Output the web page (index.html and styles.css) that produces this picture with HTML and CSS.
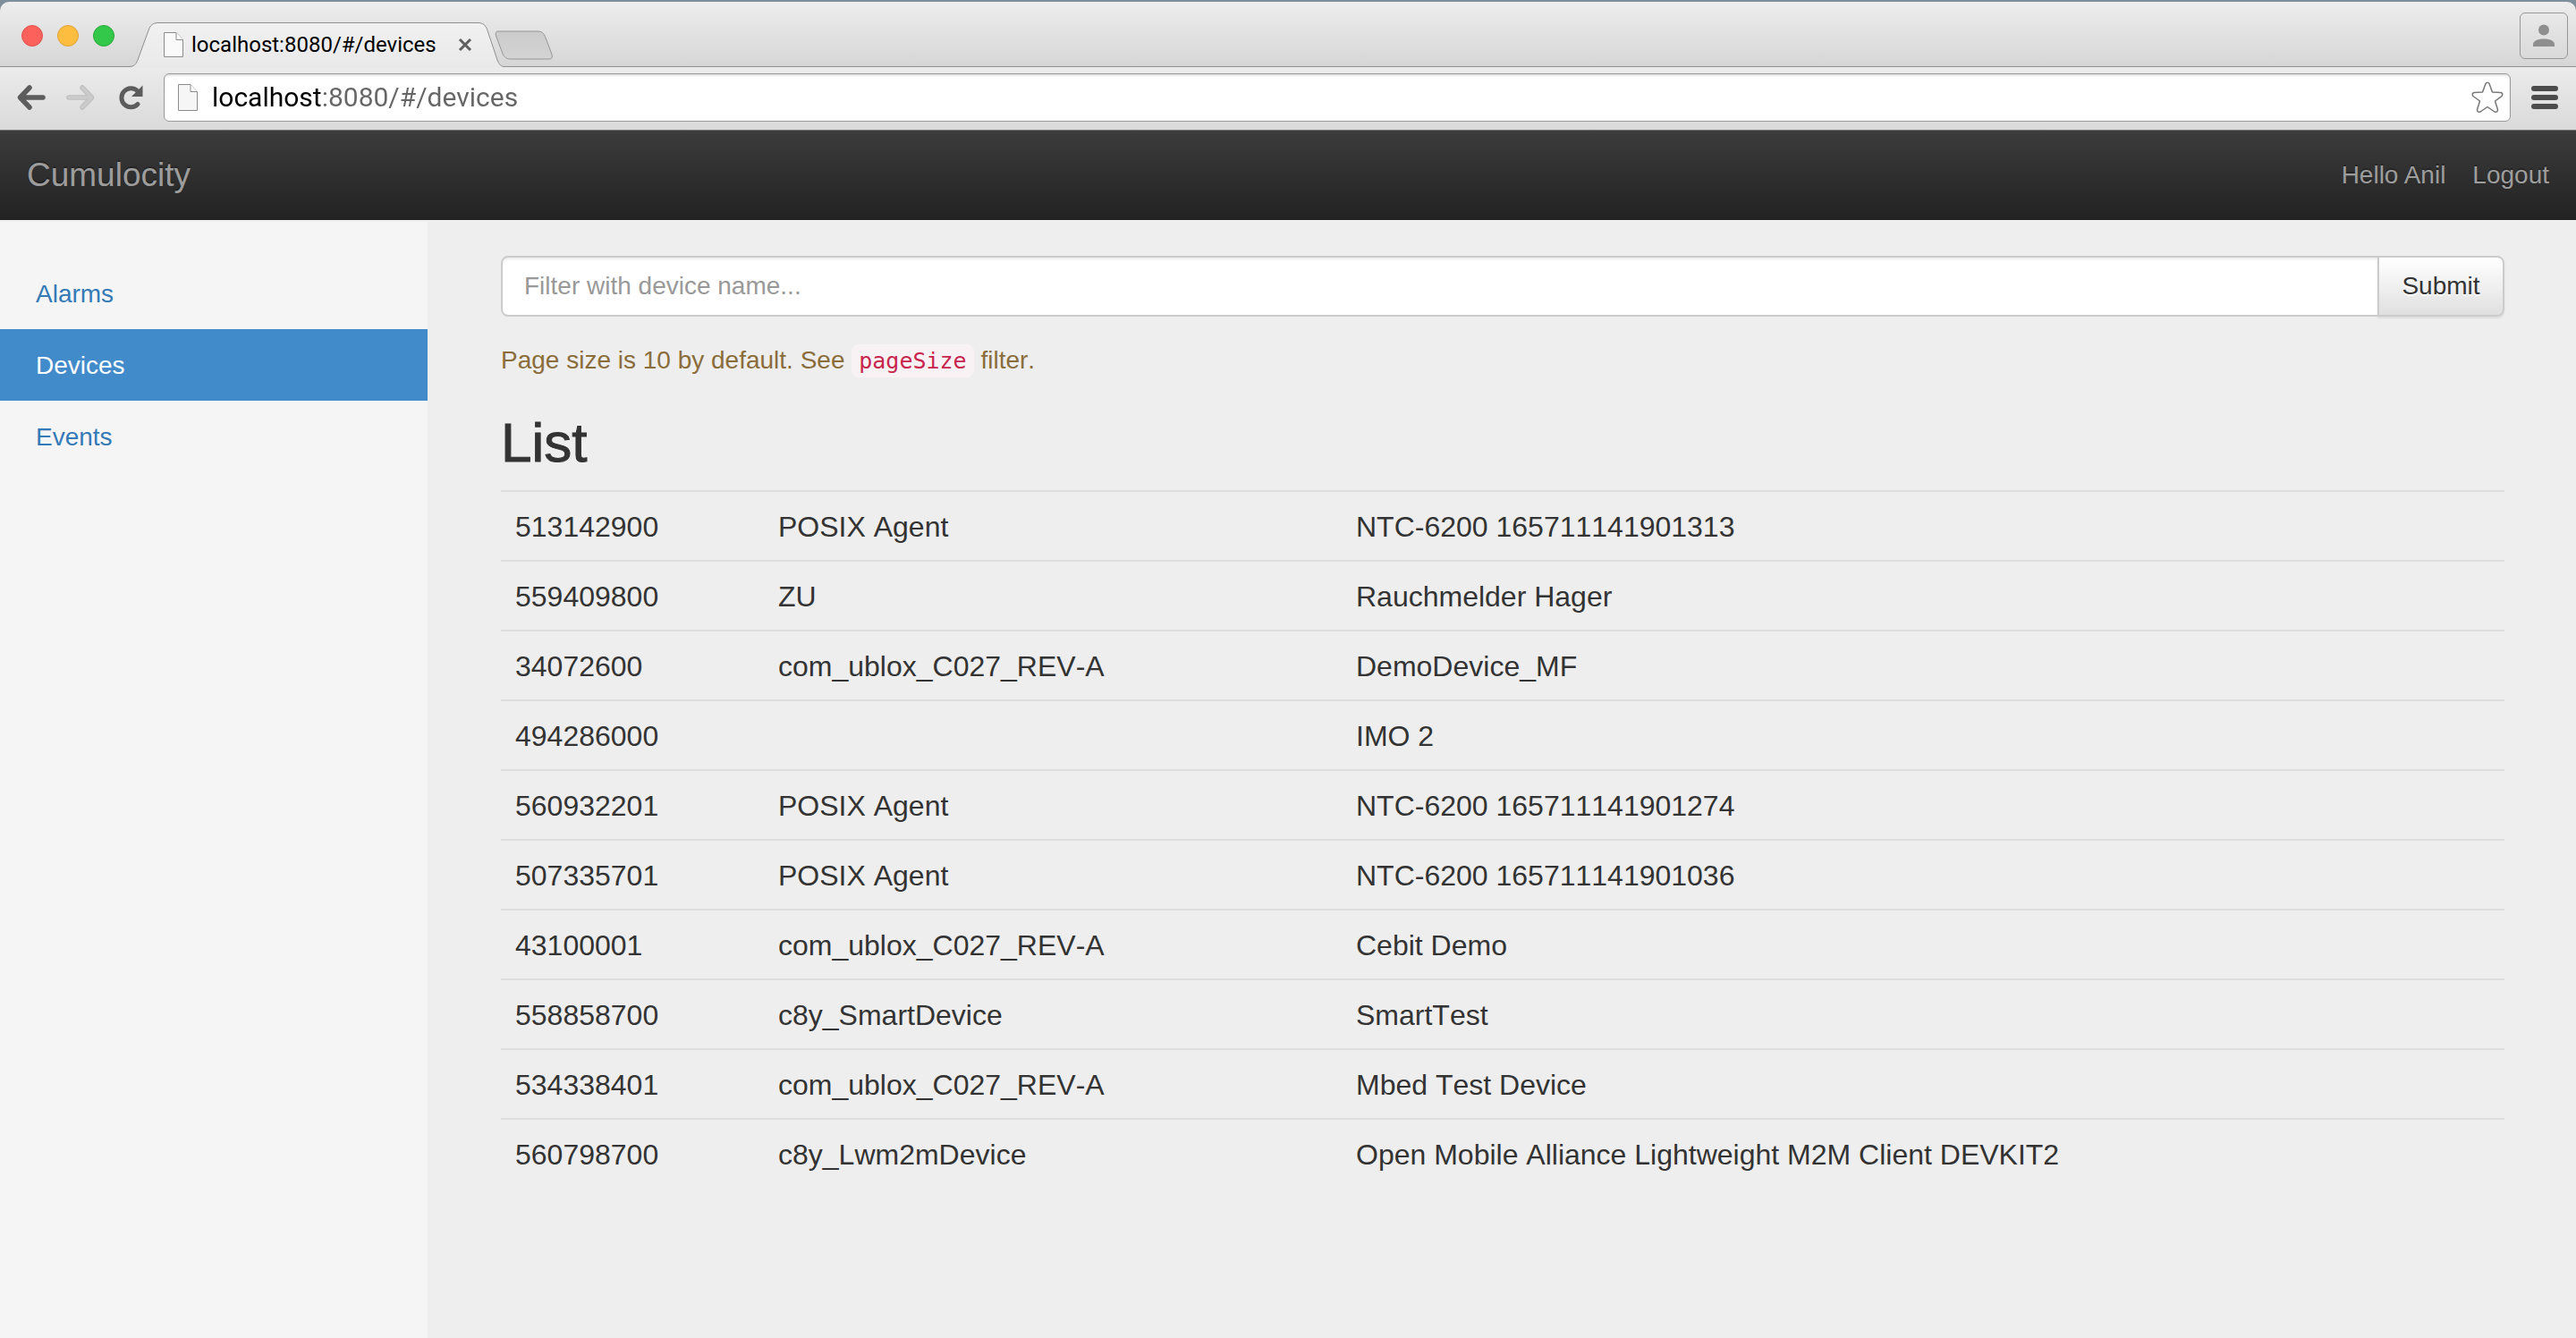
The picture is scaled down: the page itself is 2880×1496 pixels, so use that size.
FILE: index.html
```html
<!DOCTYPE html>
<html lang="en">
<head>
<meta charset="utf-8">
<title>localhost:8080/#/devices</title>
<link rel="stylesheet" href="styles.css">
</head>
<body>
<div class="window">
  <header class="chrome">
    <div class="tabstrip">
      <div class="lights">
        <button class="light light-close" aria-label="Close window"></button>
        <button class="light light-min" aria-label="Minimize window"></button>
        <button class="light light-max" aria-label="Zoom window"></button>
      </div>
      <div class="tab">
        <svg class="tab-shape" width="420" height="51" viewBox="0 0 420 51" aria-hidden="true">
          <defs><linearGradient id="tabfill" x1="0" y1="0" x2="0" y2="1"><stop offset="0" stop-color="#f1f1f1"/><stop offset="1" stop-color="#e9e9e9"/></linearGradient></defs>
          <path d="M0 51V49.5C6 49.500 8 47 10 42L22 9C24 3 27 .5 33 .5H390C396 .5 399 3 401 9L412 42C414 47 416 49.500 420 49.500V51Z" fill="url(#tabfill)"/>
          <path d="M0 49.500C6 49.500 8 47 10 42L22 9C24 3 27 .5 33 .5H390C396 .5 399 3 401 9L412 42C414 47 416 49.500 420 49.500" fill="none" stroke="#8f8f8f"/>
        </svg>
        <svg class="page-icon" width="22" height="30" viewBox="0 0 22 30" aria-hidden="true"><path d="M.5 1.500H14L21.500 9.500V28.500H.5Z" fill="#fafafa" stroke="#8c8c8c"/><path d="M14 1.500V9.500H21.500" fill="#fff" stroke="#8c8c8c"/></svg>
        <span class="tab-title">localhost:8080/#/devices</span>
        <button class="tab-close" aria-label="Close tab"><svg width="16" height="16" viewBox="0 0 16 16"><path d="M2 2L14 14M14 2L2 14" stroke="#5f5f5f" stroke-width="3"/></svg></button>
      </div>
      <button class="new-tab" aria-label="New tab"><svg width="66" height="34" viewBox="0 0 66 34"><defs><linearGradient id="nt" x1="0" y1="0" x2="0" y2="1"><stop offset="0" stop-color="#cbcbcb"/><stop offset="1" stop-color="#d4d4d4"/></linearGradient></defs><path d="M4 1H48C53 1 55 3 57 8L64 27C65 30 64 32 61 32H18C13 32 11 30 9 26L1.500 6C1 3 1 1 4 1Z" fill="url(#nt)" stroke="#959595"/></svg></button>
      <button class="profile" aria-label="Profile"><svg width="24" height="26" viewBox="0 0 24 26"><circle cx="12" cy="6.500" r="6" fill="#8e8e8e"/><path d="M0 25V22C1 18 6 16.500 12 16.500S23 18 24 22V25Z" fill="#8e8e8e"/></svg></button>
    </div>
    <div class="toolbar">
      <button class="tool" aria-label="Back"><svg width="32" height="28" viewBox="0 0 32 28"><path d="M14 3L3.500 14L14 25M4 14H29" fill="none" stroke="#5c5c5c" stroke-width="5.500" stroke-linecap="round" stroke-linejoin="round"/></svg></button>
      <button class="tool" aria-label="Forward"><svg width="32" height="28" viewBox="0 0 32 28"><path d="M18 3L28.500 14L18 25M28 14H3" fill="none" stroke="#bdbdbd" stroke-width="5.500" stroke-linecap="round" stroke-linejoin="round"/><path d="M18 3L28.500 14L18 25M28 14H3" fill="none" stroke="#cbcbcb" stroke-width="3.500" stroke-linecap="round" stroke-linejoin="round"/></svg></button>
      <button class="tool reload" aria-label="Reload"><svg width="28" height="28" viewBox="0 0 28 28"><path d="M21.500 6.500A10.500 10.500 0 1 0 22 21.500" fill="none" stroke="#5c5c5c" stroke-width="5" stroke-linecap="round"/><path d="M27.500 .5V13H15Z" fill="#5c5c5c"/></svg></button>
      <div class="address">
        <svg class="page-icon" width="22" height="30" viewBox="0 0 22 30" aria-hidden="true"><path d="M.5 .5H14L21.500 8.500V29.500H.5Z" fill="#f6f6f6" stroke="#8c8c8c"/><path d="M14 .5V8.500H21.500" fill="#fff" stroke="#8c8c8c"/></svg>
        <input class="url" type="text" value="localhost:8080/#/devices" aria-label="Address">
        <button class="star" aria-label="Bookmark"><svg width="36" height="36" viewBox="0 0 36 36"><path d="M16 2.500Q18 0 20 2.500L23.500 12L33 12.500Q36 13.500 34 16.500L26.500 22L29.500 31.500Q29.500 35 26 34L18 28.500L10 34Q6.500 35 6.500 31.500L9.500 22L2 16.500Q0 13.500 3 12.500L12.500 12Z" fill="#fff" stroke="#777" stroke-width="1.500" stroke-linejoin="round"/></svg></button>
      </div>
      <button class="menu" aria-label="Menu"><svg width="30" height="26" viewBox="0 0 30 26"><g fill="#4c4c4c"><rect width="30" height="6" rx="3"/><rect y="10" width="30" height="6" rx="3"/><rect y="20" width="30" height="6" rx="3"/></g></svg></button>
    </div>
  </header>

  <nav class="navbar">
    <a class="brand" href="#/">Cumulocity</a>
    <div class="nav-links">
      <span>Hello Anil</span>
      <a href="#/logout">Logout</a>
    </div>
  </nav>

  <div class="layout">
    <nav class="sidebar">
      <a href="#/alarms">Alarms</a>
      <a class="active" href="#/devices">Devices</a>
      <a href="#/events">Events</a>
    </nav>
    <main class="content">
      <form class="filter">
        <input class="filter-input" type="text" placeholder="Filter with device name..." aria-label="Filter with device name">
        <button class="submit" type="button">Submit</button>
      </form>
      <p class="help">Page size is 10 by default. See <code>pageSize</code> filter.</p>
      <h2>List</h2>
      <table class="devices">
        <colgroup><col class="col-id"><col class="col-type"><col></colgroup>
        <tbody>
          <tr><td>513142900</td><td>POSIX Agent</td><td>NTC-6200 165711141901313</td></tr>
          <tr><td>559409800</td><td>ZU</td><td>Rauchmelder Hager</td></tr>
          <tr><td>34072600</td><td>com_ublox_C027_REV-A</td><td>DemoDevice_MF</td></tr>
          <tr><td>494286000</td><td></td><td>IMO 2</td></tr>
          <tr><td>560932201</td><td>POSIX Agent</td><td>NTC-6200 165711141901274</td></tr>
          <tr><td>507335701</td><td>POSIX Agent</td><td>NTC-6200 165711141901036</td></tr>
          <tr><td>43100001</td><td>com_ublox_C027_REV-A</td><td>Cebit Demo</td></tr>
          <tr><td>558858700</td><td>c8y_SmartDevice</td><td>SmartTest</td></tr>
          <tr><td>534338401</td><td>com_ublox_C027_REV-A</td><td>Mbed Test Device</td></tr>
          <tr><td>560798700</td><td>c8y_Lwm2mDevice</td><td>Open Mobile Alliance Lightweight M2M Client DEVKIT2</td></tr>
        </tbody>
      </table>
    </main>
  </div>
</div>
</body>
</html>
```
FILE: styles.css
```css
*, *::before, *::after { box-sizing: border-box; }

body {
  margin: 0;
  background: #7f8e9b;
  color: #333;
  font: 28px/40px "Liberation Sans", Arial, sans-serif;
}

button {
  padding: 0;
  border: 0;
  background: none;
  font: inherit;
  color: inherit;
}

svg { display: block; flex: none; }
a { text-decoration: none; }

.window {
  display: flex;
  flex-direction: column;
  min-height: 100vh;
  padding-top: 2px;
}

/* Browser frame */
.chrome { font-family: Roboto, sans-serif; }

.tabstrip {
  display: flex;
  align-items: flex-end;
  height: 73px;
  border-radius: 10px 10px 0 0;
  border-bottom: 1px solid #8f8f8f;
  background: linear-gradient(#ededed, #d6d6d6);
}

.lights {
  display: flex;
  gap: 16px;
  width: 144px;
  padding: 0 0 22px 24px;
}

.light {
  width: 24px;
  height: 24px;
  border: 1px solid;
  border-radius: 50%;
}
.light-close { background: #fc615c; border-color: #e2504a; }
.light-min { background: #fdbe40; border-color: #e0a035; }
.light-max { background: #34c84a; border-color: #27a833; }

.tab {
  position: relative;
  display: flex;
  align-items: center;
  width: 420px;
  height: 50px;
  margin-bottom: -1px;
  padding: 0 36px 0 39px;
}
.tab-shape { position: absolute; left: 0; top: 0; }
.tab .page-icon, .tab-title, .tab-close { position: relative; }
.tab-title {
  flex: 1;
  margin-left: 9px;
  font-size: 24px;
  line-height: 28px;
  color: #000;
  white-space: nowrap;
}

.new-tab { margin: 0 auto 6px -11px; }

.profile {
  display: grid;
  place-items: center;
  width: 54px;
  height: 52px;
  margin: 0 9px 8px 0;
  border: 1px solid #989898;
  border-radius: 6px;
}

.toolbar {
  display: flex;
  align-items: center;
  height: 71px;
  padding: 0 20px 2px 19px;
  border-bottom: 1px solid #777;
  background: linear-gradient(#ebebeb, #dadada);
}
.tool { margin-right: 23px; }
.tool.reload { margin-left: 3px; }

.address {
  display: flex;
  flex: 1;
  align-items: center;
  height: 54px;
  margin-right: 23px;
  padding: 0 7px 0 15px;
  border: 1px solid #9a9a9a;
  border-radius: 6px;
  background: #fff;
  box-shadow: inset 0 2px 2px #e4e4e4;
}

/* The host is black, the rest of the URL grey */
.url {
  flex: 1;
  min-width: 0;
  height: 40px;
  margin-left: 16px;
  padding: 0;
  border: 0;
  outline: 0;
  background: linear-gradient(90deg, #000 123px, #666 123px);
  -webkit-background-clip: text;
  background-clip: text;
  -webkit-text-fill-color: transparent;
  color: #666;
  font: 30px/40px Roboto, sans-serif;
}

/* Application */
.navbar {
  display: flex;
  align-items: center;
  justify-content: space-between;
  height: 100px;
  padding: 0 30px;
  background: linear-gradient(#3c3c3c, #222);
  color: #9d9d9d;
  text-shadow: 0 -2px 0 rgba(0, 0, 0, .25);
}
.navbar a { color: inherit; }
.brand { font-size: 37px; }
.nav-links { display: flex; gap: 30px; }

.layout {
  display: grid;
  flex: 1;
  grid-template-columns: 478px 1fr;
  background: #eee;
  font-kerning: none;
}

.sidebar {
  margin-top: 2px;
  padding-top: 40px;
  background: #f5f5f5;
}
.sidebar a {
  display: block;
  padding: 21px 40px 19px;
  color: #337ab7;
}
.sidebar .active {
  background: #428bca;
  color: #fff;
}

.content { padding: 40px 80px 40px 82px; }

.filter { display: flex; }

.filter-input {
  flex: 1;
  height: 68px;
  padding: 0 24px;
  border: 2px solid #ccc;
  border-radius: 8px 0 0 8px;
  background: #fff;
  box-shadow: inset 0 2px 2px rgba(0, 0, 0, .075);
  color: #555;
  font: inherit;
}
.filter-input::placeholder { color: #999; opacity: 1; }

.submit {
  width: 142px;
  height: 68px;
  margin-left: -2px;
  border: 2px solid #ccc;
  border-radius: 0 8px 8px 0;
  background: linear-gradient(#fff, #e0e0e0);
  box-shadow: 0 2px 2px rgba(0, 0, 0, .075);
  text-shadow: 0 2px 0 #fff;
}

.help {
  margin: 29px 0 39px;
  color: #8a6d3b;
}
.help code {
  padding: 4px 8px;
  border-radius: 8px;
  background: #f9f2f4;
  color: #c7254e;
  font: 25px "DejaVu Sans Mono", monospace;
}

h2 {
  margin: 0 0 20px;
  font-size: 62px;
  font-weight: 400;
  line-height: 66px;
  -webkit-text-stroke: 1px #333;
}

.devices {
  width: 100%;
  table-layout: fixed;
  border-collapse: separate;
  border-spacing: 0;
  font-size: 32px;
  line-height: 44px;
}
.col-id { width: 294px; }
.col-type { width: 646px; }
.devices td {
  height: 78px;
  padding: 17px 16px 15px;
  border-top: 2px solid #ddd;
}
```
